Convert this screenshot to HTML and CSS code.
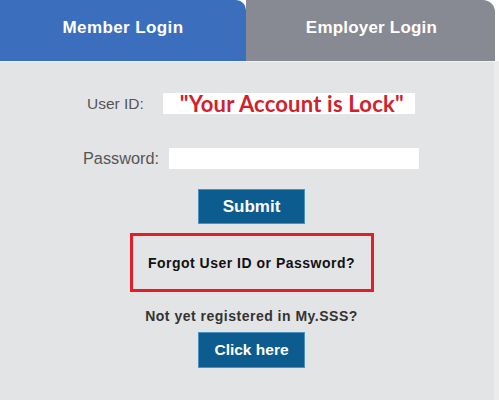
FILE: index.html
```html
<!DOCTYPE html>
<html>
<head>
<meta charset="utf-8">
<link rel="stylesheet" href="styles.css">
</head>
<body>
<div class="login">
  <div class="tabs">
    <div class="tab tab-member">Member Login</div>
    <div class="tab tab-employer">Employer Login</div>
  </div>
  <div class="panel">
    <div class="row row-user">
      <span class="label">User ID:</span>
      <div class="input input-user"><span class="lock">"Your Account is Lock"</span></div>
    </div>
    <div class="row row-pass">
      <span class="label">Password:</span>
      <div class="input input-pass"></div>
    </div>
    <div class="btn btn-submit">Submit</div>
    <div class="forgot">Forgot User ID or Password?</div>
    <div class="notyet">Not yet registered in My.SSS?</div>
    <div class="btn btn-click">Click here</div>
  </div>
</div>
</body>
</html>
```
FILE: styles.css
```css
html, body {
  margin: 0;
  padding: 0;
  background: #ffffff;
}
body {
  width: 499px;
  height: 401px;
  overflow: hidden;
  font-family: "Liberation Sans", Arial, sans-serif;
}
.login {
  width: 499px;
}
.tabs {
  display: flex;
  height: 61px;
}
.tab {
  display: flex;
  align-items: center;
  justify-content: center;
  color: #ffffff;
  font-weight: bold;
  font-size: 17px;
  letter-spacing: 0.4px;
  padding-bottom: 6px;
  box-sizing: border-box;
}
.tab-member {
  width: 246px;
  background: #3b6fbe;
  border-top-right-radius: 10px;
}
.tab-employer {
  width: 249px;
  background: #878a92;
  border-top-right-radius: 12px;
  letter-spacing: 0.2px;
  padding-left: 2px;
}
.panel {
  width: 499px;
  height: 339px;
  box-sizing: border-box;
  background: #e3e4e6;
  border-top: 1px solid #eef1f6;
  border-right: 5px solid #ececec;
  display: flex;
  flex-direction: column;
  align-items: center;
  padding-top: 31px;
  padding-left: 9px;
}
.row {
  display: flex;
  align-items: center;
  align-self: flex-start;
  height: 21px;
}
.row-user {
  padding-left: 78px;
}
.row-pass {
  padding-left: 74px;
  margin-top: 34px;
}
.label {
  color: #555555;
  font-size: 16px;
}
.row-pass .label {
  font-size: 16.3px;
}
.row-user .label {
  font-size: 15.5px;
}
.input {
  background: #ffffff;
  height: 21px;
}
.input-user {
  width: 252px;
  margin-left: 19px;
  display: flex;
  align-items: center;
  justify-content: center;
  padding-left: 6px;
  box-sizing: border-box;
}
.input-pass {
  width: 250px;
  margin-left: 10px;
}
.lock {
  font-family: Lato, "Liberation Sans", sans-serif;
  font-weight: bold;
  font-size: 22px;
  letter-spacing: 0.2px;
  color: #d3212b;
  line-height: 21px;
}
.btn {
  width: 105px;
  height: 33px;
  background: #0d5c8f;
  color: #ffffff;
  font-weight: bold;
  font-size: 17px;
  display: flex;
  align-items: center;
  justify-content: center;
  box-shadow: 0 0 0 1px #4a90c0;
}
.btn-submit {
  margin-top: 21px;
}
.forgot {
  margin-top: 10px;
  width: 244px;
  height: 59px;
  box-sizing: border-box;
  border: 3px solid #e31e28;
  display: flex;
  align-items: center;
  justify-content: center;
  font-weight: bold;
  font-size: 14px;
  letter-spacing: 0.5px;
  color: #111111;
}
.notyet {
  margin-top: 15px;
  font-weight: bold;
  font-size: 14px;
  letter-spacing: 0.5px;
  line-height: 18px;
  color: #333333;
}
.btn-click {
  margin-top: 8px;
  height: 34px;
  font-size: 15.5px;
}
```
